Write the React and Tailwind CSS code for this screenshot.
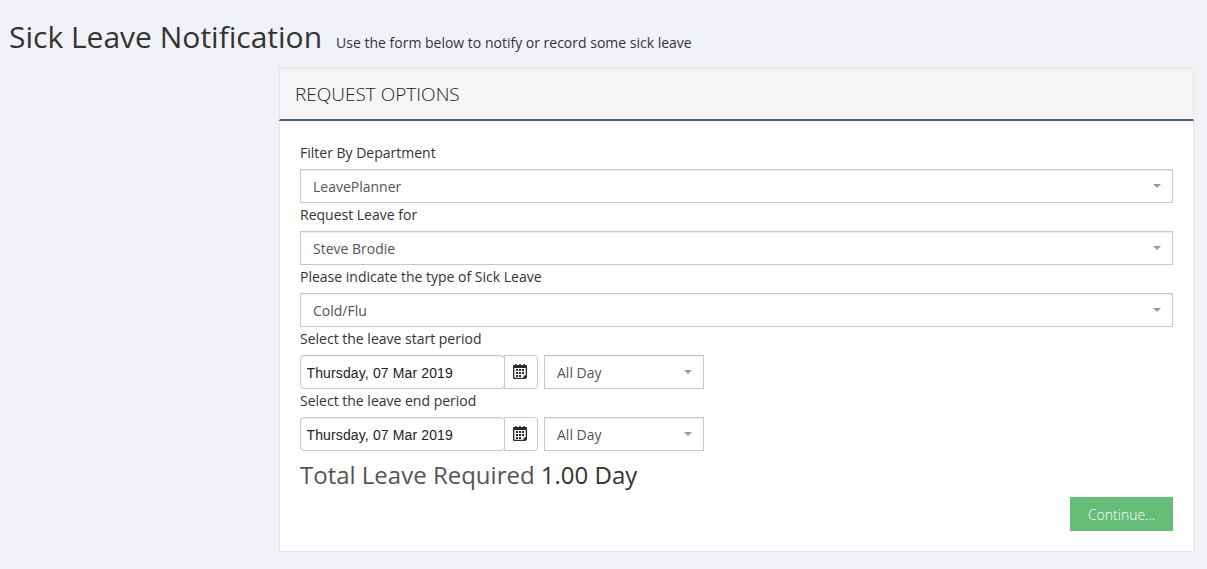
import { useState } from "react";

const DATE = "Thursday, 07 Mar 2019";

function CalendarIcon() {
    return (
        <svg width="14" height="15" viewBox="0 0 14 15" fill="none" aria-hidden="true">
            <path d="M2 0h1.4v1H6.3V0h1.4v1h2.9V0H12v1h.6c.9 0 1.4.5 1.4 1.4v11L12.6 15H1.5C.5 15 0 14.5 0 13.5V2.4C0 1.5.5 1 1.4 1H2z" fill="#2b2b2b" />
            <path d="M1.3 4h11.4v7.4h-2.1v2.3H2c-.5 0-.7-.2-.7-.7z" fill="#fff" />
            <path d="M6 5h2v2H6zM9 5h2v2H9zM3 5h2v2H3zM3 8h2v2H3zM6 8h2v2H6zM9 8h2v2H9zM3 11h2v2H3zM6 11h2v2H6z" fill="#2b2b2b" />
        </svg>
    );
}

function Field({ label, children }) {
    return (
        <div>
            <div className="h-7 pt-0.5 leading-5">{label}</div>
            {children}
        </div>
    );
}

function Select({ value, className }) {
    return (
        <button
            type="button"
            className={`flex h-[34px] items-center justify-between border border-[#c8c8c8] bg-white pr-[11px] pl-3 pt-px text-[#555] shadow-[inset_0_1px_1px_rgba(0,0,0,0.075)] ${className}`}
        >
            <span>{value}</span>
            <svg width="8" height="4" viewBox="0 0 8 4" className="mb-0.5">
                <path d="M0 0h8L4 4z" fill="#999" />
            </svg>
        </button>
    );
}

function DatePeriod({ label }) {
    const [date, setDate] = useState(DATE);

    return (
        <Field label={label}>
            <div className="flex">
                <input
                    value={date}
                    onChange={(e) => setDate(e.target.value)}
                    className="h-[34px] w-[205px] rounded-[4px] border border-[#c8c8c8] bg-white px-[5.5px] pt-px font-['Liberation_Sans',sans-serif] text-[14px] tracking-[0.13px] text-[#222] shadow-[inset_0_1px_1px_rgba(0,0,0,0.075)] outline-none"
                />
                <button
                    type="button"
                    aria-label="Open calendar"
                    className="-ml-px mr-1.5 flex h-[34px] w-[34px] items-center justify-center rounded-r-[4px] border border-[#c8c8c8] bg-white pr-[2px] pb-px"
                >
                    <CalendarIcon />
                </button>
                <Select value="All Day" className="w-40" />
            </div>
        </Field>
    );
}

export default function App() {
    return (
        <div className="min-h-screen bg-[#f1f2f7] font-['Open_Sans',sans-serif] text-[14px] text-[#333]">
            <header className="flex h-[68px] items-baseline pt-[17px] pl-[9px]">
                <h1 className="text-[30px] leading-10">Sick Leave Notification</h1>
                <span className="ml-[14px]">Use the form below to notify or record some sick leave</span>
            </header>

            <section className="mr-[13px] ml-[279px] h-[484px] border border-[#e6e7e9] bg-white">
                <div className="-mx-px flex h-[52px] items-center border-x border-b-2 border-x-[#e6e7e9] border-b-[#505b86] bg-[#f5f5f5] pl-[15px]">
                    <h2 className="text-[19px] leading-7 font-light text-[#222] uppercase">Request Options</h2>
                </div>
                <div className="px-5 pt-5">
                    <Field label="Filter By Department">
                        <Select value="LeavePlanner" className="w-full" />
                    </Field>
                    <Field label="Request Leave for">
                        <Select value="Steve Brodie" className="w-full" />
                    </Field>
                    <Field label="Please indicate the type of Sick Leave">
                        <Select value="Cold/Flu" className="w-full" />
                    </Field>
                    <DatePeriod label="Select the leave start period" />
                    <DatePeriod label="Select the leave end period" />

                    <div className="flex h-[46px] items-center pt-0.5 text-[24px] whitespace-pre">
                        <span className="text-[#555]">Total Leave Required </span>
                        <span>1.00 Day</span>
                    </div>
                    <div className="flex justify-end">
                        <button type="button" className="h-[34px] w-[103px] bg-[#65bd77] pt-px font-light text-white">
                            Continue...
                        </button>
                    </div>
                </div>
            </section>
        </div>
    );
}
